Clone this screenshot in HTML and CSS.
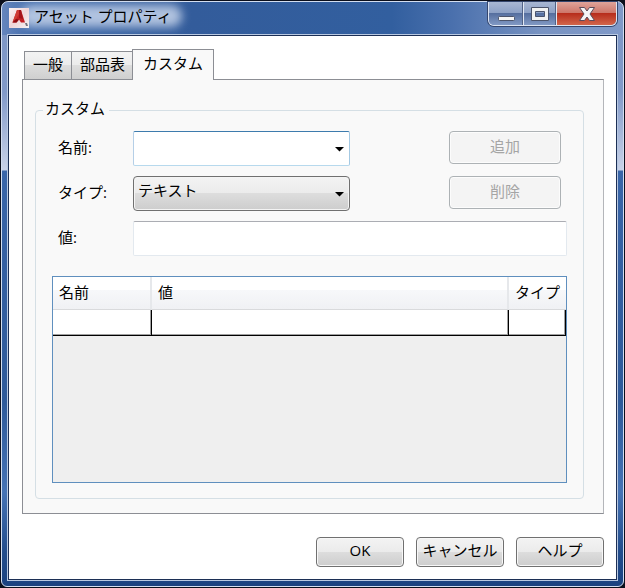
FILE: index.html
```html
<!DOCTYPE html>
<html lang="ja">
<head>
<meta charset="utf-8">
<title>アセット プロパティ</title>
<link rel="stylesheet" href="styles.css">
</head>
<body>
<div class="window">
  <header class="titlebar">
    <svg class="app-icon" width="20" height="20" viewBox="0 0 20 20" aria-hidden="true">
      <defs>
        <linearGradient id="tile" x1="0" y1="0" x2="1" y2="1"><stop offset="0" stop-color="#fbf3f4"/><stop offset=".5" stop-color="#efd5d8"/><stop offset="1" stop-color="#f7f4f5"/></linearGradient>
        <linearGradient id="mark" x1="0" y1="0" x2="0" y2="1"><stop offset="0" stop-color="#c9312c"/><stop offset="1" stop-color="#c01a20"/></linearGradient>
      </defs>
      <rect width="20" height="20" fill="url(#tile)"/>
      <path d="M8 2h4l4 12.500h-4l-2-3-2.500 3H3.500z" fill="url(#mark)"/>
      <path d="M10 2h2l2 9-4-1z" fill="#a3121a"/>
      <path d="M8 2h2v4l-3 5-3.500 3.500z" fill="#cf3a35"/>
      <path d="M10 11.500l-2.500 3h-4L7 11z" fill="#8d0c12"/>
      <path d="M16 15h2l1 3h-2z" fill="#77747c"/>
    </svg>
    <h1 class="title">アセット プロパティ</h1>
    <div class="controls">
      <button class="control minimize" type="button" aria-label="最小化">
        <svg width="18" height="18" viewBox="0 0 18 18"><rect x="1.500" y="11.500" width="16" height="4" rx="1" fill="#f5f5f5" stroke="#4c546b"/></svg>
      </button>
      <button class="control maximize" type="button" aria-label="最大化">
        <svg width="18" height="18" viewBox="0 0 18 18"><path d="M.5 2.500h17v13H.5zM4.500 6.500v5h9v-5z" fill="#f2f2f2" fill-rule="evenodd" stroke="#4c546b"/></svg>
      </button>
      <button class="control close" type="button" aria-label="閉じる">
        <svg width="18" height="18" viewBox="0 0 18 18"><path d="M1.500 2.500h5L9 6l2.500-3.500h5L12 9l4.500 6.500h-5L9 12l-2.500 3.500h-5L6 9z" fill="#f5f5f5" stroke="#5a4c5a" stroke-linejoin="round"/></svg>
      </button>
    </div>
  </header>
  <main class="client">
    <div class="tabs" role="tablist">
      <button class="tab" type="button" role="tab" aria-selected="false">一般</button>
      <button class="tab" type="button" role="tab" aria-selected="false">部品表</button>
      <button class="tab active" type="button" role="tab" aria-selected="true">カスタム</button>
    </div>
    <section class="panel" role="tabpanel">
      <fieldset class="group">
        <legend>カスタム</legend>
        <div class="form">
          <label for="name">名前:</label>
          <div class="combo">
            <input class="field name-field" id="name" type="text">
            <svg class="arrow" width="9" height="6" viewBox="0 0 9 6" aria-hidden="true"><path d="M0 1h9L4.500 5.500z"/></svg>
          </div>
          <button class="button side" type="button" disabled>追加</button>
          <label for="type">タイプ:</label>
          <div class="combo">
            <select class="type-select" id="type"><option>テキスト</option></select>
            <svg class="arrow" width="9" height="6" viewBox="0 0 9 6" aria-hidden="true"><path d="M0 1h9L4.500 5.500z"/></svg>
          </div>
          <button class="button side" type="button" disabled>削除</button>
          <label for="value">値:</label>
          <input class="field value-field" id="value" type="text">
        </div>
        <div class="grid-box">
          <table class="grid">
            <colgroup><col class="col-name"><col><col class="col-type"></colgroup>
            <thead><tr><th>名前</th><th>値</th><th>タイプ</th></tr></thead>
            <tbody><tr><td></td><td></td><td></td></tr></tbody>
          </table>
        </div>
      </fieldset>
    </section>
    <footer class="actions">
      <button class="button" type="button">OK</button>
      <button class="button" type="button">キャンセル</button>
      <button class="button" type="button">ヘルプ</button>
    </footer>
  </main>
</div>
</body>
</html>
```

FILE: styles.css
```css
* {
  box-sizing: border-box;
}

body {
  margin: 0;
  background: #0b0f1c;
  color: #000;
  font: 15px/24px "Open Sans", "Noto Sans CJK JP", sans-serif;
}

button,
input,
select {
  margin: 0;
  font: inherit;
  color: inherit;
}

/* Window frame */
.window {
  display: flex;
  flex-direction: column;
  min-height: calc(100vh - 2px);
  margin: 1px;
  padding: 0 6px 6px;
  border: 1px solid #d3def0;
  border-radius: 7px 7px 6px 6px;
  background:
    linear-gradient(90deg, #6585bd 0, #426cac 30px, #335c9b 190px, #325f9f 390px, #4a70ad 450px, #7893c2 540px, #8099c8 100%) 0 0 / 100% 33px no-repeat,
    linear-gradient(#7d96c5 0, #8199c8 90px, #c8d2e8 168px, #3a66a9 169px, #3560a2 260px, #2e5a9a 400px, #4673b5 490px, #234d8c 550px, #1b4280 100%);
}

.titlebar {
  display: flex;
  height: 33px;
  padding-left: 1px;
}

.app-icon {
  position: relative;
  z-index: 1;
  margin-top: 6px;
}

.title {
  position: relative;
  align-self: flex-start;
  margin: 3px 0 0;
  padding: 0 10px 0 5px;
  font-size: 15px;
  font-weight: 400;
  line-height: 22px;
  z-index: 0;
}

/* Soft glow behind the caption */
.title::before {
  content: "";
  position: absolute;
  inset: 0 0 0 -8px;
  z-index: -1;
  border-radius: 12px;
  background: rgba(198, 211, 234, 0.85);
  filter: blur(5px);
}

.controls {
  display: flex;
  flex: none;
  height: 24px;
  margin-left: auto;
  border: 1px solid #dce4f2;
  border-top: 0;
  border-radius: 0 0 6px 6px;
  box-shadow: 0 0 0 1px #35466d;
  overflow: hidden;
}

.control {
  display: grid;
  place-items: center;
  width: 35px;
  padding: 0;
  border: 0;
  border-right: 1px solid #e2e8f3;
  background: linear-gradient(#a9b7d3, #8ca0c5 48%, #566f9f 50%, #8199c4);
  box-shadow: inset -1px 0 #526387;
}

.maximize {
  width: 33px;
}

.close {
  width: 59px;
  border-right: 0;
  background: linear-gradient(#dfa49a, #cd7568 48%, #b72d1c 50%, #d2664b);
  box-shadow: none;
}

.client {
  display: flex;
  flex: 1;
  flex-direction: column;
  padding: 13px 12px 12px 13px;
  border: 1px solid #1c2f55;
  outline: 1px solid #b9c9e2;
  background: #fff;
}

/* Tabs */
.tabs {
  display: flex;
  align-items: flex-end;
  padding-left: 2px;
  margin-bottom: -1px;
}

.tab {
  height: 29px;
  padding: 0 8px 4px;
  border: 1px solid #8c8e94;
  background: linear-gradient(#f3f3f3, #ebebeb 49%, #dddddd 50%, #cfcfcf);
  line-height: 24px;
}

.tab + .tab {
  margin-left: -1px;
}

.tab + .tab.active {
  height: 31px;
  margin-left: -2px;
  padding: 0 10px 4px;
  border-bottom: 0;
  background: #f9f9f9;
  z-index: 1;
}

.panel {
  display: flex;
  flex: 1;
  padding: 18px 19px 14px 12px;
  border: 1px solid #8c8e94;
  border-right-color: #b4b6ba;
  background: #f9f9f9;
}

/* Group box */
.group {
  display: flex;
  flex: 1;
  flex-direction: column;
  min-width: 0;
  margin: 0;
  padding: 9px 16px 15px;
  border: 1px solid #d5dfe5;
  border-radius: 4px;
}

.group legend {
  margin-left: -9px;
  padding: 0 4px 4px 2px;
  line-height: 20px;
}

.form {
  display: grid;
  grid-template-columns: 75px 217px 1fr 112px;
  grid-auto-rows: 35px;
  row-gap: 10px;
  padding-left: 6px;
}

.form label {
  grid-column: 1;
  line-height: 33px;
}

.combo {
  position: relative;
  grid-column: 2;
}

.field,
.type-select {
  width: 100%;
  height: 35px;
  padding: 0 4px;
  border-radius: 2px;
}

.field {
  border: 1px solid #e3e9ef;
  border-top-color: #abadb3;
  background: #fff;
}

.name-field {
  padding-right: 24px;
  border-color: #3d7bad #a4c9e3 #b7d9ed #b5cfe7;
}

.type-select {
  appearance: none;
  padding: 0 24px 7px 4px;
  border: 1px solid #707070;
  border-radius: 4px;
  background: linear-gradient(#f3f3f3, #ebebeb 49%, #dddddd 50%, #cdcdcd);
  box-shadow: inset 0 0 0 1px #f4f4f4;
}

.arrow {
  position: absolute;
  right: 6px;
  top: 15px;
  pointer-events: none;
}

.value-field {
  grid-column: 2 / -1;
}

.button {
  width: 88px;
  height: 30px;
  padding: 0 0 4px;
  border: 1px solid #707070;
  border-radius: 4px;
  background: linear-gradient(#f3f3f3, #ebebeb 49%, #dddddd 50%, #cdcdcd);
  box-shadow: inset 0 0 0 1px #f7f7f7;
  line-height: 24px;
  white-space: nowrap;
}

.side {
  grid-column: 4;
  justify-self: end;
  width: 112px;
  height: 33px;
  margin-right: 6px;
}

.button:disabled {
  border-color: #adb2b5;
  background: #f4f4f4;
  box-shadow: inset 0 0 0 1px #fcfcfc;
  color: #a5a5a5;
}

/* Attribute grid */
.grid-box {
  flex: 1;
  margin-top: 20px;
  border: 1px solid #5f8fbe;
  background: #efefef;
}

.grid {
  width: 100%;
  border-collapse: separate;
  border-spacing: 0;
  table-layout: fixed;
}

.col-name {
  width: 99px;
}

.col-type {
  width: 57px;
}

.grid th {
  height: 33px;
  padding: 0 0 2px 6px;
  border-right: 2px solid #e6e8eb;
  border-bottom: 1px solid #d9dadc;
  background: linear-gradient(#fff 0, #fff 40%, #f7f8fa 41%, #f0f1f4);
  font-weight: 400;
  text-align: left;
  white-space: nowrap;
}

.grid th:last-child {
  border-right: 0;
}

.grid td {
  height: 26px;
  padding: 0;
  border-right: 1px solid #000;
  border-bottom: 1px solid #000;
  background: #fff;
  box-shadow: inset -1px -1px #a0a0a0;
}

.actions {
  display: flex;
  justify-content: flex-end;
  gap: 12px;
  margin-top: 23px;
}
```
